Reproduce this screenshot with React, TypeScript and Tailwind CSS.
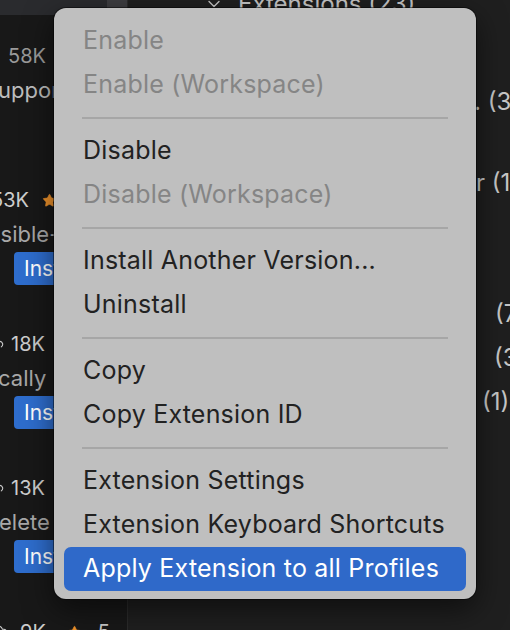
import { CloudDownload, Star, ChevronDown } from 'lucide-react';

type Item = { label: string; disabled?: boolean; active?: boolean } | 'sep';

const items: Item[] = [
  { label: 'Enable', disabled: true },
  { label: 'Enable (Workspace)', disabled: true },
  'sep',
  { label: 'Disable' },
  { label: 'Disable (Workspace)', disabled: true },
  'sep',
  { label: 'Install Another Version...' },
  { label: 'Uninstall' },
  'sep',
  { label: 'Copy' },
  { label: 'Copy Extension ID' },
  'sep',
  { label: 'Extension Settings' },
  { label: 'Extension Keyboard Shortcuts' },
  { label: 'Apply Extension to all Profiles', active: true },
];

function ContextMenu() {
  return (
    <div className="absolute left-[54px] top-[8px] w-[422px] rounded-[12px] bg-[#bfbfbf] pt-[11px] pb-[8px] shadow-[0_0_0_1px_rgba(0,0,0,0.45),0_10px_30px_rgba(0,0,0,0.55)] flex flex-col">
      {items.map((it, i) =>
        it === 'sep' ? (
          <div key={i} className="h-[22px] flex items-center px-[28px]">
            <div className="h-[2px] w-full bg-[#a6a6a6]" />
          </div>
        ) : (
          <div
            key={i}
            className={
              'h-[44px] mx-[10px] px-[19px] flex items-center rounded-[7px] text-[25px] tracking-[0.2px] whitespace-nowrap ' +
              (it.active ? 'bg-[#2f69c9] text-white' : it.disabled ? 'text-[#858585]' : 'text-[#222222]')
            }
          >
            {it.label}
          </div>
        )
      )}
    </div>
  );
}

function Stats({ left, downloads, star, bright }: { left: number; downloads: string; star?: number; bright?: boolean }) {
  return (
    <div className="h-[44px] shrink-0 flex items-center whitespace-nowrap text-[20px]" style={{ marginLeft: left }}>
      <span className={bright ? 'text-[#cccccc]' : 'text-[#9a9a9a]'}>{downloads}</span>
      {star !== undefined && (
        <Star className="w-[15px] h-[15px] text-[#f0932b] fill-[#f0932b]" strokeWidth={1} style={{ marginLeft: star }} />
      )}
    </div>
  );
}

function Row({ children, desc, descLeft, descColor, install }: { children: React.ReactNode; desc: string; descLeft: number; descColor: string; install?: boolean }) {
  return (
    <div className="h-[144px] shrink-0 flex flex-col">
      {children}
      <div className={'h-[24px] shrink-0 flex items-center whitespace-nowrap text-[22px] ' + descColor} style={{ marginLeft: descLeft }}>
        {desc}
      </div>
      {install && (
        <div className="mt-[6px] ml-[14px] h-[33px] w-[90px] shrink-0 rounded-[4px] bg-[#2e6dcd] text-white text-[21px] flex items-center pl-[10px]">
          Install
        </div>
      )}
    </div>
  );
}

export default function App() {
  return (
    <div className="w-[510px] h-[630px] relative overflow-hidden flex font-['Inter','Noto_Sans',sans-serif]">
      <aside className="w-[128px] shrink-0 bg-[#181818] border-r border-[#2b2b2b] overflow-hidden flex flex-col">
        <div className="h-[15px] shrink-0 bg-[#2a2b2e] flex justify-end">
          <div className="w-[20px] bg-[#3d3d40]" />
        </div>
        <div className="h-[19px] shrink-0" />
        <Row desc="upport" descLeft={-2} descColor="text-[#bdbdbd]">
          <Stats left={8} downloads="58K" />
        </Row>
        <Row desc="ssible-" descLeft={-11} descColor="text-[#a8a8a8]" install>
          <Stats left={-9} downloads="53K" star={13} bright />
        </Row>
        <Row desc="cally" descLeft={-2} descColor="text-[#a8a8a8]" install>
          <div className="h-[44px] shrink-0 flex items-center whitespace-nowrap text-[20px] ml-[-12px] text-[#cccccc]">
            <CloudDownload className="w-[16px] h-[16px]" strokeWidth={1.6} />
            <span className="ml-[7px]">18K</span>
          </div>
        </Row>
        <Row desc="elete" descLeft={-1} descColor="text-[#a8a8a8]" install>
          <div className="h-[44px] shrink-0 flex items-center whitespace-nowrap text-[20px] ml-[-12px] text-[#cccccc]">
            <CloudDownload className="w-[16px] h-[16px]" strokeWidth={1.6} />
            <span className="ml-[7px]">13K</span>
          </div>
        </Row>
        <div className="h-[44px] shrink-0 flex items-center whitespace-nowrap text-[20px] ml-[-8px] text-[#cccccc]">
          <CloudDownload className="w-[16px] h-[16px]" strokeWidth={1.6} />
          <span className="ml-[12px]">9K</span>
          <Star className="ml-[21px] w-[15px] h-[15px] text-[#f0932b] fill-[#f0932b]" strokeWidth={1} />
          <span className="ml-[16px]">5</span>
        </div>
      </aside>

      <main className="flex-1 bg-[#1f1f1f] overflow-hidden flex flex-col text-[#c6c6c6] text-[24px] whitespace-nowrap">
        <div className="mt-[-10px] h-[28px] leading-[28px] flex items-center shrink-0">
          <ChevronDown className="ml-[76px] w-[20px] h-[20px]" strokeWidth={1.6} />
          <span className="ml-[14px]">Extensions (23)</span>
        </div>
        <div className="mt-[62px] h-[44px] flex items-center pl-[346px] shrink-0">. (3)</div>
        <div className="mt-[37px] h-[44px] flex items-center pl-[348px] shrink-0">r (1)</div>
        <div className="mt-[87px] h-[44px] flex items-center pl-[367px] shrink-0">(7)</div>
        <div className="h-[44px] flex items-center pl-[366px] shrink-0">(3)</div>
        <div className="h-[44px] flex items-center pl-[354px] shrink-0">(1)</div>
      </main>

      <ContextMenu />
    </div>
  );
}
